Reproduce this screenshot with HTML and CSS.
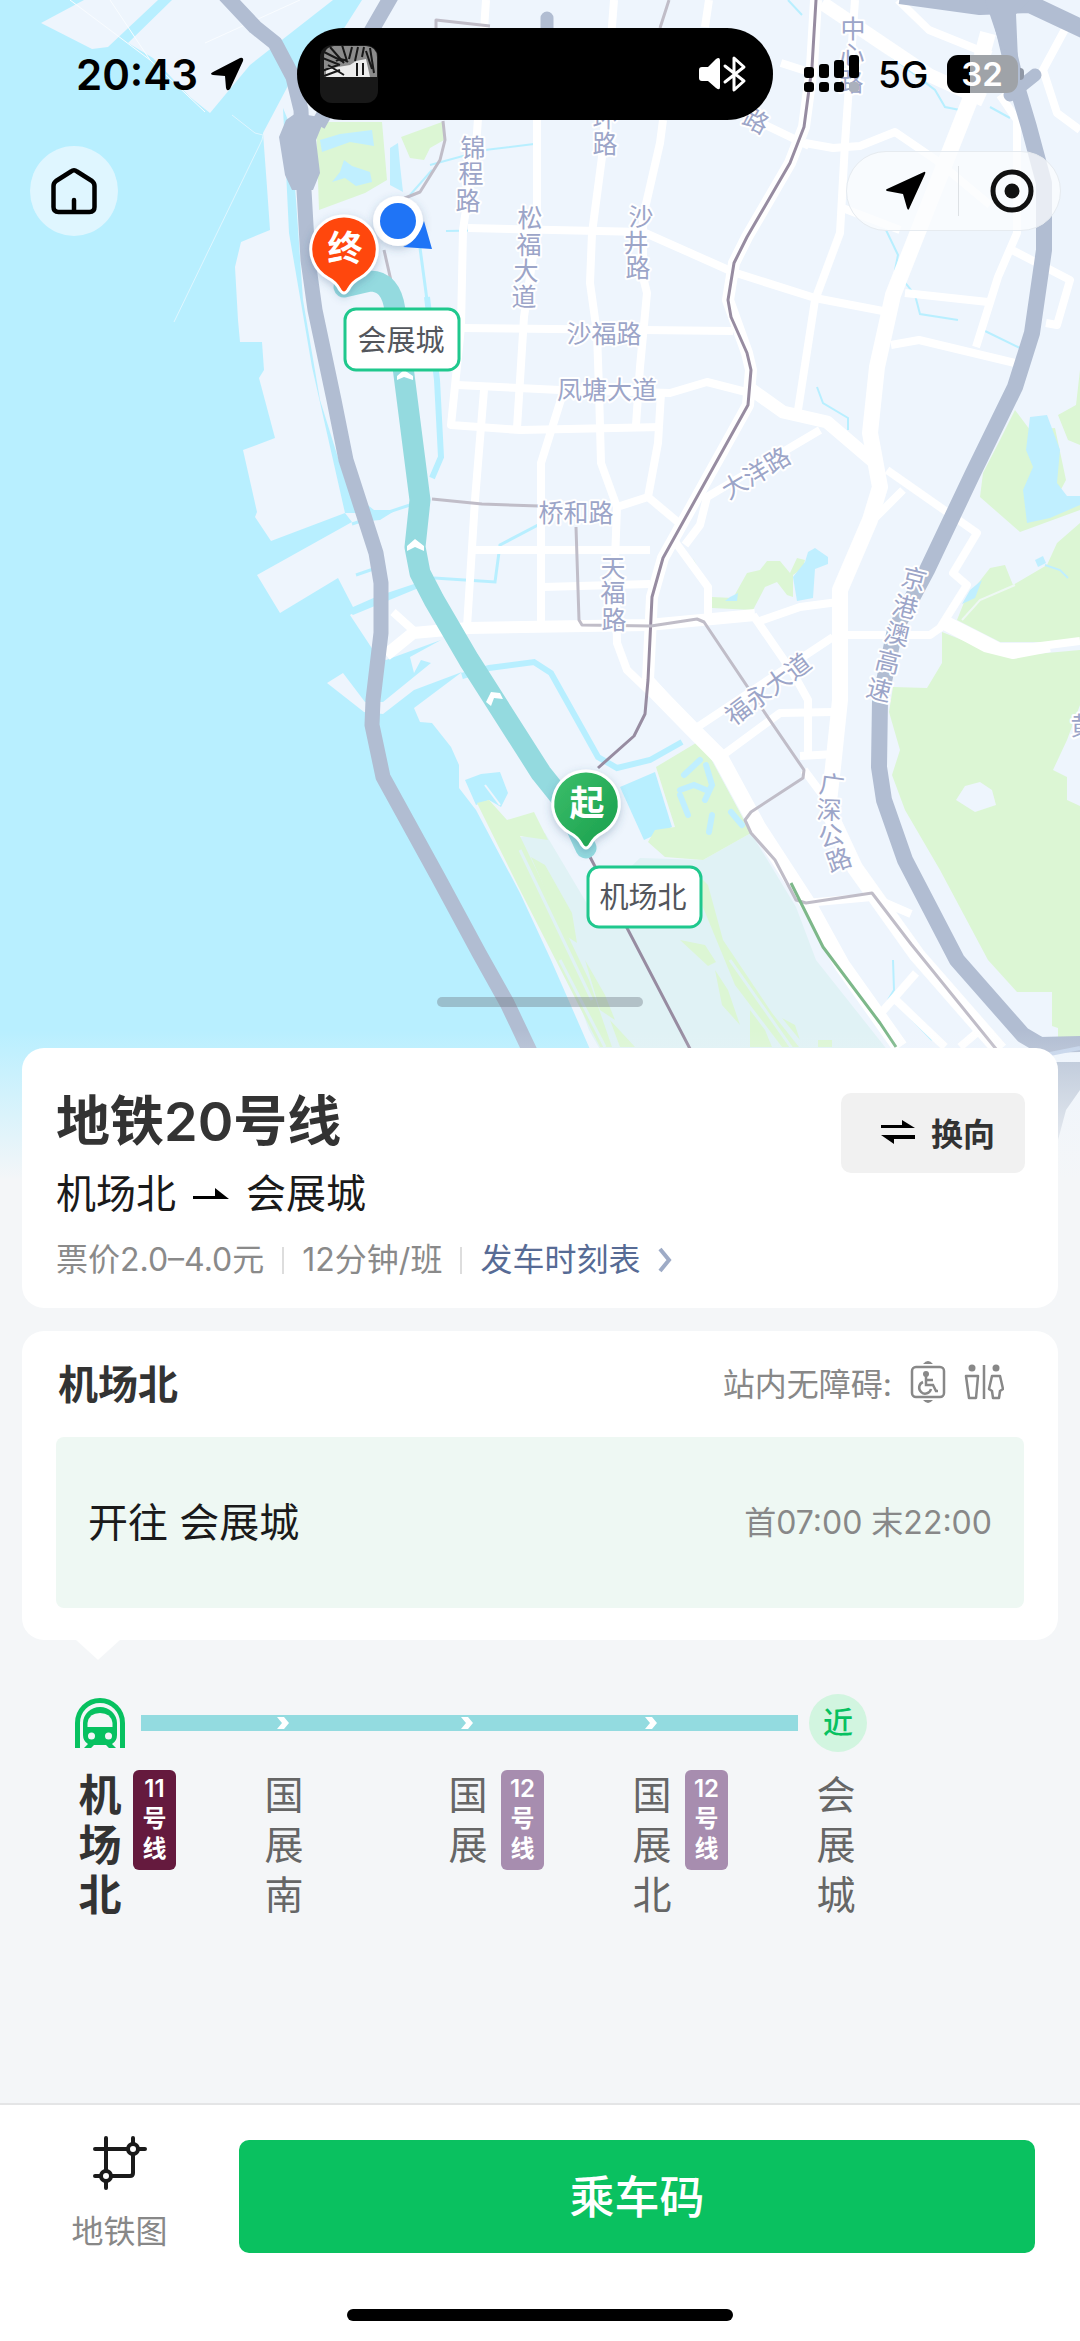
FILE: index.html
```html
<!DOCTYPE html>
<html lang="zh-CN">
    <head>
        <meta charset="utf-8">
        <meta name="viewport" content="width=device-width, initial-scale=1">
        <title>地铁20号线</title>
        <link rel="stylesheet" href="styles.css">
    </head>
    <body>
        <div class="page">
            <!-- 地图底图 -->
            <svg class="map" viewBox="0 0 1080 1180" aria-hidden="true">
                <defs>
                    <linearGradient id="fade" x1="0" y1="0" x2="0" y2="1">
                        <stop offset="0" stop-color="#f4f6f8" stop-opacity="0"/>
                        <stop offset="1" stop-color="#f4f6f8"/>
                    </linearGradient>
                    <linearGradient id="start" x1="0" y1="0" x2="1" y2="1">
                        <stop offset="0" stop-color="#3cbf6c"/>
                        <stop offset="1" stop-color="#189e4a"/>
                    </linearGradient>
                    <filter id="shadow" x="-40%" y="-40%" width="180%" height="180%">
                        <feDropShadow dx="0" dy="3" stdDeviation="4" flood-color="#3a5a80" flood-opacity=".3"/>
                    </filter>
                </defs>
                <rect width="1080" height="1180" fill="#b8efff"/>

                <!-- 陆地 -->
                <g fill="#eef5fd">
                    <path d="M41 23L84 0H158L108 47L92 49Z"/>
                    <path d="M172 0L128 43L153 58L190 97L210 113L250 65L333 0Z"/>
                    <path d="M362 0L334 44L290 82L263 133L267 187L270 230L241 242L235 267L238 320L240 342L262 342L264 370L259 378L275 438L243 450L257 512L255 517L271 541L345 513L352 522L257 575L280 613L338 578L353 607L378 596L350 615L375 653L386 660L441 640L410 657L414 673L421 660L431 663L383 702L365 702L343 673L327 683L364 712L383 714L414 690L462 672L414 708L420 722L432 723L451 747L459 765L459 788L476 810L520 893L551 960L589 1047L640 1180H1080V0Z"/>
                </g>
                <path d="M232 115L255 133L263 135L262 140L174 322" fill="none" stroke="#dff6ff" stroke-width="1"/>
                <path d="M70 0L150 60L205 112M150 60L110 0M205 43L300 0" fill="none" stroke="#f9fcff" stroke-width="1"/>

                <!-- 机场 -->
                <path d="M505 840L545 833L589 907L640 858L703 860L751 833L796 907L816 960L885 1047L930 1120H640L589 1030L560 950Z" fill="#e0f2f5"/>

                <!-- 水系 -->
                <g fill="#b8efff">
                    <path d="M283 108L290 125L296 200L303 300L320 400L345 480L358 513L345 513L312 367L289 233Z"/>
                    <path d="M355 495L374 510L396 510L380 520L358 522Z"/>
                    <path d="M378 596L420 582L421 587L353 615L349 612Z"/>
                    <path d="M465 780L481 774L500 772L508 793L501 807L489 800L476 805Z"/>
                    <path d="M620 787L655 772L672 827L644 840Z"/>
                </g>
                <g fill="none" stroke="#b8efff">
                    <path d="M427 297L437 380L441 457L432 478" stroke-width="6"/>
                    <path d="M462 676L489 668L534 662L551 673L598 757L617 768L650 760L682 742" stroke-width="6"/>
                    <path d="M434 578L495 582L500 545L538 525M385 565L356 575M352 524L410 505" stroke-width="3"/>
                    <path d="M430 165L485 150L534 144M446 231L505 230L525 225M410 195L432 170" stroke-width="2"/>
                    <path d="M420 248L427 300" stroke-width="3"/>
                    <path d="M886 230L898 255L895 270L915 295L920 314L958 320M985 331L1020 348M817 387L823 403L848 418V430" stroke-width="2"/>
                    <path d="M876 45L935 90L945 107L965 111M990 107L1010 118M788 0L802 15" stroke-width="2"/>
                    <path d="M893 960L894 990L888 1000M905 1012L932 1040" stroke-width="2"/>
                </g>

                <!-- 绿地 -->
                <g fill="#dcf6d4">
                    <path d="M316 122H382L387 180L365 193L319 210Z"/>
                    <path d="M401 137L442 122L444 140L430 148L424 160L410 158Z"/>
                    <path d="M693 558L712 597L733 598L747 573L760 570L767 561L780 561L790 573L797 558L805 560L803 568L793 575V597L787 595L777 582L765 587L753 610L712 608Z"/>
                    <path d="M1015 410L1030 430L1055 428L1066 480L1058 495L1080 505V510L1020 532L980 497L983 473L1000 440Z"/>
                    <path d="M1080 370L1076 405L1058 415L1068 440L1080 445Z"/>
                    <path d="M1080 523L1057 543L1047 565L1013 585L1005 565L990 568L965 600L957 620L1000 642H1080Z"/>
                    <path d="M942 632L987 650L1013 656L1080 650V705L1067 740L1053 770L1067 777V800L1080 806V1038L1058 1042V1028L1052 1026V992L1017 992L988 960L940 870L905 810L892 775L900 750L889 712L893 687L927 688L942 663Z"/>
                    <path d="M656 767L696 743L710 757L751 833L703 860L665 857L648 842L655 830L675 827Z"/>
                    <path d="M477 803L489 800L507 820L534 812L548 840L520 836L570 940L589 980L612 1047H600L520 890Z"/>
                    <path d="M531 857L545 865L572 913L577 943L565 935Z"/>
                    <path d="M585 960L605 995L615 1020L600 1010ZM610 1020L635 1047H620Z"/>
                    <path d="M696 873L708 885L723 940L772 1013L799 1047H782L735 985L700 900Z"/>
                    <path d="M680 940L705 945L716 962L708 966ZM715 970L728 990L740 1025L722 1005ZM750 1010L765 1030L772 1047H750ZM818 1040H832V1047H818ZM782 1018L795 1025L800 1040Z"/>
                </g>
                <path d="M520 850L592 1000M605 1047L560 960M715 880L755 985M730 960L800 1060" fill="none" stroke="#e0f2f5" stroke-width="3"/>
                <path d="M485 785L500 805" stroke="#eef5fd" stroke-width="2"/>
                <g fill="#c0efff">
                    <path d="M793 577L805 562L808 552L815 548L828 557V564L815 569L813 598L797 601Z"/>
                    <path d="M730 597L738 593L737 601L725 601Z"/>
                    <path d="M1030 417L1047 415L1060 450L1057 483L1067 496L1080 496V505L1050 518L1027 523L1023 490L1033 467L1026 450Z"/>
                    <path d="M970 590L982 580L975 598L962 604ZM1035 560L1043 556L1046 563L1038 567Z"/>
                    <path d="M320 140L340 134L372 130L374 146L350 142L322 152Z"/>
                    <path d="M344 160L352 166L370 172L372 182L356 186L345 178L332 182L340 172ZM390 148L398 143L400 165L403 192L390 185Z"/>
                </g>
                <path d="M684 775L700 760M680 790L694 785L706 790M680 795L688 815M706 765L712 785L705 800M712 815L709 832M731 812L742 825" fill="none" stroke="#c0efff" stroke-width="6" stroke-linecap="round"/>
                <path d="M962 620L980 600L1015 585" fill="none" stroke="#eef8f4" stroke-width="2"/>
                <path d="M1045 565L1060 570L1068 578" fill="none" stroke="#c0efff" stroke-width="2"/>
                <path d="M956 800L965 786L980 782L992 790L996 805L975 812Z" fill="#eef5fd"/>

                <!-- 普通道路 -->
                <g fill="none" stroke="#fff" stroke-width="8" stroke-linejoin="round">
                    <path d="M486 0L477 133L463 230L461 327L451 425L520 430L662 427"/>
                    <path d="M461 328L733 331M457 385L560 390L670 393L707 382L750 393"/>
                    <path d="M468 228L643 232L733 272L815 298L888 312"/>
                    <path d="M537 120V230L524 317L517 428"/>
                    <path d="M614 0L602 157L592 233L590 283L597 333L599 390L601 463L617 507L615 560L617 643L627 670L648 690"/>
                    <path d="M709 0L705 27M663 120L660 143L643 217V277L647 293L640 367L636 425"/>
                    <path d="M484 390L475 500L467 627M563 393L541 463V627"/>
                    <path d="M661 393L658 443L648 497L617 507M648 497L679 523"/>
                    <path d="M473 550L650 550M543 587L650 584"/>
                    <path d="M393 612L413 630M753 615L793 673L808 700V757M757 622L800 607L838 602"/>
                    <path d="M676 543L708 587V616M820 430L707 497L700 525L685 545M903 490L868 525"/>
                    <path d="M887 470L977 533L953 573L967 585L940 628L930 635H840"/>
                    <path d="M947 620L1000 647H1033L1080 641M944 626L985 648L1013 655L1050 648"/>
                    <path d="M833 637L693 730M833 712L780 713L723 755M800 756L835 754M804 770L830 805"/>
                    <path d="M898 0L929 30L991 55M855 0L845 143L840 233L815 300L798 410"/>
                    <path d="M805 143L833 148L860 146L895 132L936 160L990 205M1000 95L1017 120V233L998 277L976 347M905 293L988 302M891 345L919 340L1015 363M840 207L900 230"/>
                    <path d="M1012 250L1070 280L1057 325L1046 323M1070 20L1043 70L1057 113L1080 130M781 63L809 72M755 120L809 146"/>
                    <path d="M916 973L875 1020M896 1000L945 1047M980 1030L960 1047"/>
                </g>
                <!-- 主干道 -->
                <g fill="none" stroke="#fff" stroke-linejoin="round">
                    <path d="M386 655L413 633L469 628L648 625L755 615" stroke-width="12"/>
                    <path d="M816 0L812 67L804 127L790 163L747 237L734 263L728 300L747 353L751 370L748 405L663 558L652 597L648 680L693 730" stroke-width="12"/>
                    <path d="M745 385L783 412L827 422L875 463" stroke-width="13"/>
                    <path d="M822 3L929 75L984 100" stroke-width="14"/>
                    <path d="M988 33L970 100L893 295L877 367L870 433L880 487L870 520L840 590V700L833 767L828 810L855 868L917 955L1000 1050" stroke-width="16"/>
                    <path d="M650 686L693 730L720 757L758 827L810 907L842 965L900 1047" stroke-width="16"/>
                    <path d="M806 903L872 897L911 914" stroke-width="8"/>
                </g>

                <!-- 高速 -->
                <g fill="none" stroke="#b1bdd2" stroke-linejoin="round">
                    <path d="M225 -5L255 27L275 43L293 77L301 110L304 190L308 260L315 310L334 400L346 460L376 553L381 583V633L373 700L372 725L383 777L438 877L479 953L507 1003L535 1062" stroke-width="15"/>
                    <path d="M392 -5L373 28L318 125" stroke-width="15"/>
                    <path d="M900 -5L980 6L1030 4L1085 30" stroke-width="18"/>
                    <path d="M1000 15L1018 90L1029 127L1044 183V250L1032 333L1015 387L973 473L927 570L895 630L880 700L879 767L884 800L905 860L957 960L1023 1035L1040 1045L1085 1044" stroke-width="16"/>
                    <path d="M1010 95L1035 75M547 18V40" stroke-width="13" stroke-linecap="round"/>
                </g>
                <path d="M1050 1054L1080 1048" fill="none" stroke="#c3d3ea" stroke-width="4"/>
                <path d="M1040 1062H1080V1090L1066 1110L1058 1140L1040 1150Z" fill="#b5c2d5"/>
                <path d="M985 0L1030 0L1016 14L1018 60L1000 45ZM296 113L325 118L316 140L320 173L313 190H292L285 175L279 137L286 120Z" fill="#b1bdd2"/>

                <!-- 地铁线 -->
                <g fill="none" stroke-linejoin="round">
                    <path d="M816 0L812 67L804 127L790 163L747 237L734 263L728 300L731 317L747 353L751 370L748 405L663 558L652 597L648 680L645 714L634 736L598 768M589 855L700 1068" stroke="#978ca1" stroke-width="3"/>
                    <path d="M432 499L482 504L539 506M576 527L579 620L582 625L651 626L697 619L704 622L763 710L804 770L803 778L751 812L745 820L751 833L775 860L796 900L806 903L872 893L911 944L1005 1060M436 28V20L490 26M443 121L445 140L440 160L420 192L400 200M384 250L392 285M669 0L660 28" stroke="#c0bdc8" stroke-width="3"/>
                    <path d="M791 883L823 947L880 1023L896 1047" stroke="#7db88a" stroke-width="3"/>
                    <path d="M586 848L565 803L541 773L469 660L434 600L420 573L415 547L420 500L403 367L395 310Q391 281 370 281L344 287" stroke="#94dadf" stroke-width="21" stroke-linecap="round"/>
                </g>
                <g fill="#fff">
                    <path d="M415 539L424 546V551L415 547L407 551V546Z"/>
                    <path d="M404 370L413 376V380L404 377L397 380V376Z"/>
                    <path d="M491 692L500 693L503 699L494 698L491 706L486 702Z"/>
                </g>

                <!-- 路名 -->
                <g class="road-name">
                    <text><tspan x="473" y="157">锦</tspan><tspan x="471" y="183">程</tspan><tspan x="468" y="210">路</tspan></text>
                    <text><tspan x="530" y="227">松</tspan><tspan x="529" y="254">福</tspan><tspan x="526" y="280">大</tspan><tspan x="524" y="306">道</tspan></text>
                    <text><tspan x="605" y="127">环</tspan><tspan x="605" y="153">路</tspan></text>
                    <text><tspan x="853" y="38">中</tspan><tspan x="852" y="64">心</tspan><tspan x="851" y="91">路</tspan></text>
                    <text><tspan x="641" y="226">沙</tspan><tspan x="636" y="252">井</tspan><tspan x="638" y="277">路</tspan></text>
                    <text><tspan x="613" y="577">天</tspan><tspan x="613" y="602">福</tspan><tspan x="614" y="629">路</tspan></text>
                    <text x="604" y="343">沙福路</text>
                    <text x="607" y="399">凤塘大道</text>
                    <text x="576" y="522">桥和路</text>
                    <text transform="translate(756 121) rotate(28)" y="9">路</text>
                    <text transform="translate(756 473) rotate(-31)" y="9">大洋路</text>
                    <text transform="translate(768 689) rotate(-37)" y="9">福永大道</text>
                    <text transform="translate(914 579) rotate(14)" y="9">京</text>
                    <text transform="translate(905 607) rotate(14)" y="9">港</text>
                    <text transform="translate(897 634) rotate(14)" y="9">澳</text>
                    <text transform="translate(888 662) rotate(14)" y="9">高</text>
                    <text transform="translate(879 690) rotate(14)" y="9">速</text>
                    <text transform="translate(832 785) rotate(8)" y="9">广</text>
                    <text transform="translate(829 810) rotate(2)" y="9">深</text>
                    <text transform="translate(831 836) rotate(-14)" y="9">公</text>
                    <text transform="translate(839 860) rotate(-20)" y="9">路</text>
                    <text x="1083" y="735">黄</text>
                </g>

                <!-- 当前位置 -->
                <circle cx="398" cy="221" r="25" fill="#fff" filter="url(#shadow)"/>
                <path d="M424 221L432 249L403 247Q418 241 424 221Z" fill="#1f74f6"/>
                <circle cx="398" cy="221" r="18" fill="#1f74f6"/>

                <!-- 起终点 -->
                <path d="M344 216A33 33 0 0 1 360 278Q352 282 348 290Q344 296 340 290Q336 282 328 278A33 33 0 0 1 344 216Z" fill="#ff460f" stroke="#fff" stroke-width="3" filter="url(#shadow)"/>
                <text class="pin-text" x="345" y="261">终</text>
                <path d="M586 771A33 33 0 0 1 602 833Q594 837 590 845Q586 851 582 845Q578 837 570 833A33 33 0 0 1 586 771Z" fill="url(#start)" stroke="#fff" stroke-width="3" filter="url(#shadow)"/>
                <text class="pin-text" x="587" y="816">起</text>
                <g class="station-label">
                    <rect x="345" y="309" width="114" height="61" rx="11"/>
                    <text x="401" y="351">会展城</text>
                    <rect x="588" y="867" width="113" height="60" rx="11"/>
                    <text x="643" y="908">机场北</text>
                </g>
                <rect y="1030" width="1080" height="150" fill="url(#fade)"/>
            </svg>

            <header class="map-area">
                <!-- 状态栏 -->
                <div class="status-bar">
                    <div class="status-left">
                        <span>20:43</span>
                        <svg width="34" height="34" viewBox="0 0 34 34"><path d="M3 15L30 1Q34 0 33 4L20 32Q17 35 16 31L15 19L3 18Q-1 17 3 15Z"/></svg>
                    </div>
                    <div class="island">
                        <svg width="58" height="58" viewBox="0 0 58 58">
                            <rect width="58" height="58" rx="12" fill="#181818"/>
                            <path d="M4 32V12Q4 2 14 1H46Q57 2 57 12V32Z" fill="#8b8b8b"/>
                            <path d="M6 32V24L18 22L30 20L36 16L46 14L50 32Z" fill="#ececec"/>
                            <path d="M2 6L22 16M0 12L20 20M2 26L18 20M10 2L24 18M22 0L27 16M32 2L29 14M38 2L35 16M44 2L42 12M50 3L54 28M16 16Q22 12 28 17M4 31L20 25M37 18V31M43 18V30M8 20L24 30M46 6L52 24" fill="none" stroke="#181818" stroke-width="2"/>
                        </svg>
                        <svg width="48" height="38" viewBox="0 0 48 38">
                            <path d="M3 12H9L17 4Q21 1 21 6V32Q21 36 17 33L9 26H3Q0 26 0 23V15Q0 12 3 12Z" fill="#fff"/>
                            <path d="M26 11L45 26L35 35V3L45 12L26 27" fill="none" stroke="#fff" stroke-width="3" stroke-linejoin="round" stroke-linecap="round"/>
                        </svg>
                    </div>
                    <div class="status-right">
                        <svg width="56" height="38" viewBox="0 0 56 38">
                            <rect x="0" y="12" width="10" height="11" rx="3"/><rect x="15" y="9" width="10" height="14" rx="3"/><rect x="30" y="5" width="10" height="18" rx="3"/><rect x="45" y="0" width="10" height="23" rx="3"/>
                            <rect x="0" y="27" width="10" height="10" rx="3"/><rect x="15" y="27" width="10" height="10" rx="3"/><rect x="30" y="27" width="10" height="10" rx="3"/><rect x="45" y="27" width="10" height="10" rx="3" fill="#aab0bc"/>
                        </svg>
                        <span class="network">5G</span>
                        <div class="battery"><span>32</span></div>
                    </div>
                </div>

                <!-- 顶部按钮 -->
                <nav class="top-nav">
                    <button type="button" class="home-button" aria-label="首页">
                        <svg width="48" height="48" viewBox="0 0 48 48" fill="none" stroke="#000" stroke-width="4.5" stroke-linecap="round" stroke-linejoin="round"><path d="M21 4.500Q24 2 27 4.500L42 14Q44.500 16 44.500 19V40Q44.500 45 39.500 45H8.500Q3.500 45 3.500 40V19Q3.500 16 6 14ZM24 45V33"/></svg>
                    </button>
                    <div class="capsule">
                        <button type="button" aria-label="定位"><svg width="40" height="40" viewBox="0 0 40 40"><path d="M1 18L38 1Q40 0 39 3L23 38Q22 40 21 37L17 23L1 20Q-1 19 1 18Z"/></svg></button>
                        <button type="button" aria-label="关闭"><svg width="44" height="44" viewBox="0 0 44 44"><circle cx="22" cy="22" r="19" fill="none" stroke="#111" stroke-width="5"/><circle cx="22" cy="22" r="7.500" fill="#111"/></svg></button>
                    </div>
                </nav>
                <div class="drag-handle"></div>
            </header>

            <main class="content">
                <!-- 线路信息 -->
                <section class="card line-card">
                    <div class="line-head">
                        <div>
                            <h1>地铁20号线</h1>
                            <p class="direction">机场北
                                <svg width="36" height="12" viewBox="0 0 36 12"><path d="M0 8H22V0L36 11H0Z"/></svg>
                                会展城</p>
                        </div>
                        <button type="button" class="swap-button">
                            <svg width="34" height="24" viewBox="0 0 34 24"><path d="M0 5H21V0L34 8H0ZM34 19H13V24L0 15H34Z"/></svg>
                            换向
                        </button>
                    </div>
                    <div class="line-meta">
                        <span>票价2.0–4.0元</span>
                        <i></i>
                        <span>12分钟/班</span>
                        <i></i>
                        <a href="#">发车时刻表
                            <svg width="14" height="26" viewBox="0 0 14 26"><path d="M2 2L11 13L2 24" fill="none" stroke="#9eabc6" stroke-width="4"/></svg>
                        </a>
                    </div>
                </section>

                <!-- 站点信息 -->
                <section class="card station-card">
                    <div class="station-head">
                        <h2>机场北</h2>
                        <div class="access">
                            <span>站内无障碍:</span>
                            <svg width="36" height="44" viewBox="0 0 36 44" fill="none" stroke="#888" stroke-width="2.500">
                                <rect x="2" y="7" width="32" height="30" rx="4"/>
                                <path d="M13 4Q18 -2 23 4ZM13 40Q18 46 23 40Z" fill="#888" stroke="none"/>
                                <circle cx="16" cy="14" r="3" fill="#888" stroke="none"/>
                                <path d="M16 16V25H23L26 31H28M16 20H23M13 22A6 6 0 1 0 21 29"/>
                            </svg>
                            <svg width="40" height="36" viewBox="0 0 40 36" fill="none" stroke="#888" stroke-width="2.500" stroke-linejoin="round">
                                <circle cx="8" cy="4" r="3.500" fill="#888" stroke="none"/><circle cx="32" cy="4" r="3.500" fill="#888" stroke="none"/>
                                <path d="M2 12H14L12 34H5ZM20 1V35M28 12H36L39 25L36 27L35 34H29L28 27L25 25Z"/>
                            </svg>
                        </div>
                    </div>
                    <div class="bound">
                        <span class="bound-to">开往 会展城</span>
                        <span class="bound-time">首07:00 末22:00</span>
                    </div>
                </section>

                <!-- 站点列表 -->
                <section class="route">
                    <div class="track">
                        <svg class="train" width="50" height="50" viewBox="0 0 50 50">
                            <path d="M2.500 50V25A22.500 22.500 0 0 1 47.500 25V50" fill="none" stroke="#07c160" stroke-width="5"/>
                            <path d="M8 25A17 16 0 0 1 42 25V37Q42 43 37 46L41 50H34L31 47H19L16 50H9L13 46Q8 43 8 37Z" fill="#07c160"/>
                            <path d="M12.500 29V25Q14 15 25 15T37.500 25V29Z" fill="#f4f6f8"/>
                            <circle cx="16.500" cy="38" r="3.500" fill="#f4f6f8"/><circle cx="33.500" cy="38" r="3.500" fill="#f4f6f8"/>
                        </svg>
                        <div class="bar">
                            <svg width="12" height="12" viewBox="0 0 12 12"><path d="M0 0H7L12 6L7 12H0L5 6Z" fill="#fff"/></svg>
                            <svg width="12" height="12" viewBox="0 0 12 12"><path d="M0 0H7L12 6L7 12H0L5 6Z" fill="#fff"/></svg>
                            <svg width="12" height="12" viewBox="0 0 12 12"><path d="M0 0H7L12 6L7 12H0L5 6Z" fill="#fff"/></svg>
                        </div>
                        <span class="near">近</span>
                    </div>
                    <ol class="stations">
                        <li class="current"><span class="name">机场北</span><span class="badge line-11">11<br>号<br>线</span></li>
                        <li><span class="name">国展南</span></li>
                        <li><span class="name">国展</span><span class="badge line-12">12<br>号<br>线</span></li>
                        <li><span class="name">国展北</span><span class="badge line-12">12<br>号<br>线</span></li>
                        <li><span class="name">会展城</span></li>
                    </ol>
                </section>
            </main>

            <!-- 底部操作栏 -->
            <footer class="footer">
                <div class="footer-actions">
                    <a class="metro-map" href="#">
                        <svg width="54" height="54" viewBox="0 0 54 54" fill="none" stroke="#1a1a1a" stroke-width="4" stroke-linecap="round">
                            <path d="M2 13H52M13 2V52M40 2V37Q40 40 37 40H2"/>
                            <circle cx="40" cy="13" r="5" fill="#fff"/><circle cx="13" cy="40" r="5" fill="#fff"/>
                        </svg>
                        地铁图
                    </a>
                    <button type="button" class="ride-button">乘车码</button>
                </div>
                <div class="home-indicator"></div>
            </footer>
        </div>
    </body>
</html>
```
FILE: styles.css
```css
* {
    box-sizing: border-box;
}

body {
    margin: 0;
    background-color: #f4f6f8;
    color: #1a1a1a;
    font-family: Inter, "Noto Sans CJK SC", sans-serif;
}

h1,
h2,
p,
ol {
    margin: 0;
    padding: 0;
}

svg {
    flex-shrink: 0;
}

button {
    border: none;
    padding: 0;
    cursor: pointer;
    font-family: inherit;
    color: inherit;
}

a {
    text-decoration: none;
}

.page {
    position: relative;
    display: flex;
    flex-direction: column;
    min-height: 100vh;
    overflow: hidden;
}

/* 地图垫在内容下面 */
.map {
    position: absolute;
    top: 0;
    left: 0;
    width: 100%;
    height: auto;
    z-index: -1;
}

.road-name {
    font-size: 25px;
    fill: #9ca5c8;
    stroke: #fff;
    stroke-width: 4px;
    stroke-linejoin: round;
    paint-order: stroke;
    text-anchor: middle;
}

.pin-text {
    font-size: 35px;
    font-weight: 700;
    fill: #fff;
    text-anchor: middle;
}

.station-label rect {
    fill: #fff;
    stroke: #1fc88d;
    stroke-width: 3px;
}

.station-label text {
    font-size: 29px;
    fill: #53565c;
    text-anchor: middle;
}

.map-area {
    display: flex;
    flex-direction: column;
    aspect-ratio: 1080 / 1048;
}

/* 状态栏 */
.status-bar {
    display: grid;
    grid-template-columns: 1fr 476px 1fr;
    align-items: center;
    padding: 28px 10px 0 0;
}

.status-left,
.status-right {
    display: flex;
    align-items: center;
}

.status-left {
    padding-left: 76px;
    gap: 12px;
    font-size: 42px;
    font-weight: 600;
    color: #000;
}

.status-right {
    padding-left: 31px;
    gap: 18px;
}

.island {
    display: flex;
    align-items: center;
    justify-content: space-between;
    height: 92px;
    padding: 0 26px 0 23px;
    border-radius: 46px;
    background-color: #000;
}

.network {
    font-size: 37px;
    font-weight: 500;
    color: #000;
}

.battery {
    position: relative;
    width: 71px;
    height: 38px;
    border-radius: 11px;
    background: linear-gradient(to right, #000 32%, #9fa3a8 32%);
    color: #fff;
    font-size: 33px;
    font-weight: 600;
    line-height: 38px;
    text-align: center;
}

.battery::after {
    content: "";
    position: absolute;
    right: -6px;
    top: 13px;
    width: 4px;
    height: 12px;
    border-radius: 0 4px 4px 0;
    background-color: #9098a6;
}

/* 顶部按钮 */
.top-nav {
    display: flex;
    align-items: center;
    justify-content: space-between;
    padding: 26px 19px 0 30px;
}

.home-button {
    display: flex;
    align-items: center;
    justify-content: center;
    width: 88px;
    height: 90px;
    border-radius: 50%;
    background-color: #dff6ff;
}

.capsule {
    display: flex;
    width: 215px;
    height: 80px;
    border: 1px solid #e6ebf0;
    border-radius: 40px;
    background-color: rgba(251, 252, 253, 0.75);
}

.capsule button {
    display: flex;
    flex: 1;
    align-items: center;
    justify-content: center;
    padding-left: 8px;
    background: none;
}

.capsule button + button {
    justify-content: flex-start;
    padding-left: 0;
}

.capsule button + button::before {
    content: "";
    width: 1px;
    height: 50px;
    margin-right: 31px;
    background-color: #dde1e5;
}

.drag-handle {
    width: 206px;
    height: 10px;
    margin: auto auto 41px;
    border-radius: 5px;
    background-color: rgba(110, 120, 130, 0.4);
}

/* 卡片 */
.content {
    display: flex;
    flex: 1;
    flex-direction: column;
}

.card {
    margin: 0 22px 23px;
    border-radius: 22px;
    background-color: #fff;
}

.line-card {
    padding: 36px 33px 24px 34px;
}

.line-head {
    display: flex;
    align-items: flex-start;
    justify-content: space-between;
}

h1 {
    font-size: 54px;
    font-weight: 600;
    line-height: 76px;
    color: #333;
}

.direction {
    display: flex;
    align-items: center;
    gap: 17px;
    font-size: 40px;
    line-height: 68px;
}

.swap-button {
    display: flex;
    align-items: center;
    justify-content: center;
    gap: 16px;
    width: 184px;
    height: 80px;
    margin-top: 9px;
    padding: 0 0 3px 10px;
    border-radius: 10px;
    background-color: #f1f1f1;
    font-size: 32px;
    font-weight: 700;
    color: #333;
}

.line-meta {
    display: flex;
    align-items: center;
    gap: 18px;
    padding-top: 8px;
    font-size: 32px;
    line-height: 48px;
    color: #8a8a8a;
}

.line-meta i {
    width: 2px;
    height: 27px;
    background-color: #ddd;
}

.line-meta a {
    display: flex;
    align-items: center;
    gap: 18px;
    color: #576b95;
}

/* 站点卡片 */
.station-card {
    position: relative;
    padding: 26px 34px 32px;
}

.station-card::after {
    content: "";
    position: absolute;
    left: 54px;
    top: 100%;
    border: 22px solid transparent;
    border-top: 20px solid #fff;
    border-bottom: 0;
}

.station-head {
    display: flex;
    align-items: center;
    justify-content: space-between;
    height: 50px;
    margin-bottom: 30px;
    padding: 0 20px 0 2px;
}

h2 {
    font-size: 40px;
    color: #333;
}

.access {
    display: flex;
    align-items: center;
    gap: 18px;
    font-size: 32px;
    color: #888;
}

.bound {
    display: flex;
    align-items: center;
    justify-content: space-between;
    height: 171px;
    padding: 0 32px 6px;
    border-radius: 8px;
    background-color: #eef8f3;
}

.bound-to {
    font-size: 40px;
}

.bound-time {
    font-size: 32px;
    color: #888;
}

/* 站点列表 */
.route {
    padding: 31px 0 0 75px;
}

.track {
    display: flex;
    align-items: center;
    height: 58px;
}

.bar {
    display: flex;
    align-items: center;
    gap: 172px;
    width: 657px;
    height: 16px;
    margin: 0 11px 0 16px;
    padding-left: 136px;
    background-color: #93dbe0;
}

.near {
    width: 58px;
    height: 58px;
    border-radius: 50%;
    background-color: #d2f5e0;
    color: #07c160;
    font-size: 30px;
    font-weight: 500;
    line-height: 56px;
    text-align: center;
}

.stations {
    display: flex;
    padding-top: 18px;
    list-style: none;
}

.stations li {
    display: flex;
    align-items: flex-start;
    gap: 8px;
    width: 184px;
}

.name {
    width: 50px;
    padding: 0 5px;
    color: #666;
    font-size: 39px;
    line-height: 50px;
    text-align: center;
    word-break: break-all;
}

.current .name {
    padding: 0 3px;
    color: #333;
    font-size: 43px;
    font-weight: 700;
}

.badge {
    width: 43px;
    height: 100px;
    padding: 4px 0;
    border-radius: 6px;
    color: #fff;
    font-size: 24px;
    font-weight: 600;
    line-height: 30px;
    text-align: center;
}

.line-11 {
    background-color: #651a3e;
}

.line-12 {
    background-color: #a78daf;
}

/* 底部操作栏 */
.footer {
    border-top: 2px solid #e4e5e6;
    background-color: #fff;
}

.footer-actions {
    display: flex;
    align-items: flex-start;
    padding: 31px 45px 0 0;
}

.metro-map {
    display: flex;
    flex-direction: column;
    align-items: center;
    gap: 18px;
    width: 239px;
    color: #888;
    font-size: 32px;
    line-height: 48px;
}

.ride-button {
    flex: 1;
    height: 113px;
    margin-top: 4px;
    padding-bottom: 4px;
    border-radius: 10px;
    background-color: #0ac160;
    color: #fff;
    font-size: 45px;
    font-weight: 500;
}

.home-indicator {
    width: 386px;
    height: 12px;
    margin: 53px auto 20px;
    border-radius: 6px;
    background-color: #000;
}
```
